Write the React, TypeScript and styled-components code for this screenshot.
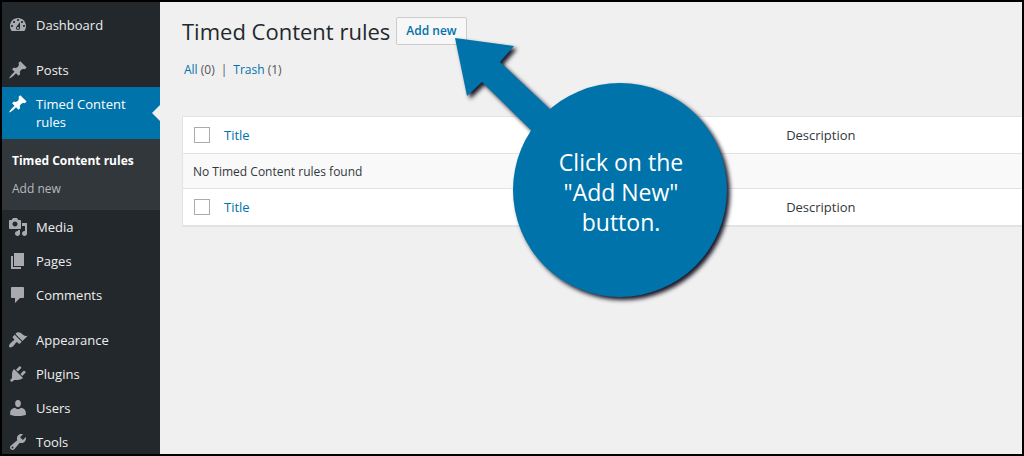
import React from "react";
import styled, { createGlobalStyle, css } from "styled-components";

const GlobalStyle = createGlobalStyle`
  *, *::before, *::after { box-sizing: border-box; }
  body {
    margin: 0;
    background: #f0f0f0;
    color: #32373c;
    font: 13px/18px "Open Sans", "Noto Sans", sans-serif;
  }
  a { color: #0073aa; text-decoration: none; }
`;

const Frame = styled.div`
  position: relative;
  display: flex;
  height: 100vh;
  border: 2px solid #000;
  overflow: hidden;
`;

const Sidebar = styled.nav`
  flex: 0 0 158px;
  padding-top: 6px;
  background: #23282d;
`;

const Menu = styled.ul`
  margin: 0;
  padding: 0;
  list-style: none;
`;

const MenuItem = styled.li<{ $gap?: boolean }>`
  margin-top: ${(p) => (p.$gap ? 11 : 0)}px;
`;

const MenuLink = styled.a<{ $current?: boolean }>`
  position: relative;
  display: flex;
  align-items: flex-start;
  gap: 8px;
  padding: 8px 24px 8px 6px;
  color: #eee;
  ${(p) =>
    p.$current &&
    css`
      background: #0073aa;
      color: #fff;
      &::after {
        content: "";
        position: absolute;
        right: 0;
        top: 50%;
        margin-top: -8px;
        border: 8px solid transparent;
        border-left-width: 0;
        border-right-color: #f0f0f0;
      }
    `}
`;

const MenuIcon = styled.svg<{ $current?: boolean }>`
  flex: none;
  width: 20px;
  height: 20px;
  margin: -1px 0;
  fill: ${(p) => (p.$current ? "#fff" : "#a8aaaf")};
`;

const Submenu = styled.ul`
  margin: 0;
  padding: 8px 0 7px;
  list-style: none;
  background: #32373c;
`;

const SubmenuLink = styled.a<{ $current?: boolean }>`
  display: block;
  padding: 5px 10px;
  white-space: nowrap;
  font-size: 12px;
  color: ${(p) => (p.$current ? "#fff" : "#b4b9be")};
  font-weight: ${(p) => (p.$current ? 700 : 400)};
`;

const Main = styled.main`
  flex: 1;
  min-width: 0;
  padding: 14px 0 0 22px;
`;

const Header = styled.header`
  display: flex;
  align-items: center;
  gap: 6px;
`;

const Title = styled.h1`
  margin: 0;
  font-size: 22px;
  line-height: 30px;
  font-weight: 400;
  color: #23282d;
`;

const AddButton = styled.button`
  height: 28px;
  padding: 0 9px;
  border: 1px solid #ccc;
  border-radius: 2px;
  background: #f7f7f7;
  color: #0073aa;
  font: 600 12px/16px "Open Sans", "Noto Sans", sans-serif;
`;

const Filters = styled.div`
  display: flex;
  gap: 6px;
  padding: 15px 2px 0;
  margin-bottom: 37px;
  font-size: 12px;
  color: #555;
`;

const RuleTable = styled.table`
  width: 100%;
  table-layout: fixed;
  border-collapse: separate;
  border-spacing: 0;
  border: 1px solid #e1e4e4;
  border-width: 1px 0 2px 1px;
  background: #fff;
`;

const Cell = styled.td<{ $width?: string }>`
  width: ${(p) => p.$width ?? "auto"};
  height: 36px;
  padding: 0 0 0 11px;
  text-align: left;
  font-weight: 400;
  vertical-align: middle;
  tbody & {
    padding: 1px 10px 0;
    border: solid #e1e4e4;
    border-width: 1px 0;
    background: #f9f9f9;
    font-size: 12px;
  }
`;

const Checkbox = styled.input`
  appearance: none;
  display: block;
  width: 16px;
  height: 16px;
  margin: 0;
  border: 1px solid #a8acb0;
  background: #fff;
`;

const Callout = styled.aside`
  position: absolute;
  left: 451px;
  top: 34px;
  width: 284px;
  height: 270px;
`;

const CalloutShape = styled.svg`
  display: block;
  overflow: visible;
  fill: #0073aa;
  filter: drop-shadow(3px 3px 2px #191526);
`;

const CalloutText = styled.p`
  position: absolute;
  left: 60px;
  top: 111px;
  width: 216px;
  margin: 0;
  color: #fff;
  font-size: 23px;
  line-height: 30px;
  text-align: center;
`;

const icons = {
  dashboard:
    "M3.76 16h12.48c1.1-1.37 1.76-3.11 1.76-5 0-4.42-3.58-8-8-8s-8 3.58-8 8c0 1.89.66 3.63 1.76 5zM10 4c.55 0 1 .45 1 1s-.45 1-1 1-1-.45-1-1 .45-1 1-1zM6 6c.55 0 1 .45 1 1s-.45 1-1 1-1-.45-1-1 .45-1 1-1zm8 0c.55 0 1 .45 1 1s-.45 1-1 1-1-.45-1-1 .45-1 1-1zm-5.37 5.55L12 7v6c0 1.1-.9 2-2 2s-2-.9-2-2c0-.57.24-1.08.63-1.45zM4 10c.55 0 1 .45 1 1s-.45 1-1 1-1-.45-1-1 .45-1 1-1zm12 0c.55 0 1 .45 1 1s-.45 1-1 1-1-.45-1-1 .45-1 1-1zm-5 3c0-.55-.45-1-1-1s-1 .45-1 1 .45 1 1 1 1-.45 1-1z",
  pin: "M10.44 3.02l1.82-1.82 6.36 6.35-1.83 1.82c-1.05-.68-2.48-.57-3.41.36l-.75.75c-.92.93-1.04 2.35-.35 3.41l-1.83 1.82-2.41-2.41-2.8 2.79c-.42.42-3.38 2.71-3.8 2.29s1.86-3.39 2.28-3.81l2.79-2.79L4.1 9.36l1.83-1.82c1.05.69 2.48.57 3.4-.36l.75-.75c.93-.92 1.05-2.35.36-3.41z",
  media:
    "M13 11V4c0-.55-.45-1-1-1h-1.67L9 1H5L3.67 3H2c-.55 0-1 .45-1 1v7c0 .55.45 1 1 1h10c.55 0 1-.45 1-1zM7 4.5c1.38 0 2.5 1.12 2.5 2.5S8.38 9.5 7 9.5 4.5 8.38 4.5 7 5.62 4.5 7 4.5zM14 6h5v10.5c0 1.38-1.12 2.5-2.5 2.5S14 17.88 14 16.5s1.12-2.5 2.5-2.5c.17 0 .34.02.5.05V9h-3V6zm-4 8.05V13h2v3.5c0 1.38-1.12 2.5-2.5 2.5S7 17.88 7 16.5 8.12 14 9.5 14c.17 0 .34.02.5.05z",
  pages: "M6 15V2h10v13H6zm-1 1h8v2H3V5h2v11z",
  comments:
    "M4 2h11c.55 0 1 .45 1 1v9c0 .55-.45 1-1 1h-3l-5 5v-5H4c-.55 0-1-.45-1-1V3c0-.55.45-1 1-1z",
  appearance:
    "M14.48 11.06L7.41 3.99l1.5-1.5c.5-.56 2.3-.47 3.51.32 1.21.8 1.43 1.28 2.91 2.1 1.18.64 2.45 1.26 4.45.85zm-.71.71L6.7 4.7 4.93 6.47c-.39.39-.39 1.02 0 1.41l1.06 1.06c.39.39.39 1.03 0 1.42-.6.6-1.43 1.11-2.21 1.69-.35.26-.7.53-1.01.84C1.43 14.23.4 16.08 1.4 17.07c.99 1 2.84-.03 4.18-1.36.31-.31.58-.66.85-1.02.57-.78 1.08-1.61 1.69-2.21.39-.39 1.02-.39 1.41 0l1.06 1.06c.39.39 1.02.39 1.41 0z",
  plugins:
    "M13.11 4.36L9.87 7.6 8 5.73l3.24-3.24c.35-.34 1.05-.2 1.56.32.52.51.66 1.21.31 1.55zm-8 1.77l.91-1.12 9.01 9.01-1.19.84c-.71.71-2.63 1.16-3.82 1.16H6.14L4.9 17.26c-.59.59-1.54.59-2.12 0-.59-.58-.59-1.53 0-2.12l1.24-1.24v-3.88c0-1.13.4-3.19 1.09-3.89zm7.26 3.97l3.24-3.24c.34-.35 1.04-.21 1.55.31.52.51.66 1.21.31 1.55l-3.24 3.25z",
  users:
    "M10 9.25C7.9 9.25 7.1 7.4 7.1 5.6 7.1 3.6 8.1 2 10 2s2.9 1.6 2.9 3.6c0 1.8-.8 3.65-2.9 3.65zM10 11.2c1.2 0 2.2-.6 2.9-1.4 2.6.2 4.9 2.2 4.9 4.7V17s-3.9 1.1-7.8 1.1S2.2 17 2.2 17v-2.5c0-2.5 2.3-4.5 4.9-4.7.7.8 1.7 1.4 2.9 1.4z",
  tools:
    "M16.68 9.77c-1.34 1.34-3.3 1.67-4.95.99l-5.41 6.52c-.99.99-2.59.99-3.58 0s-.99-2.59 0-3.57l6.52-5.42c-.68-1.65-.35-3.61.99-4.95 1.28-1.28 3.12-1.62 4.72-1.06l-2.89 2.89 2.82 2.82 2.86-2.87c.53 1.58.18 3.39-1.08 4.65zM3.81 16.21c.4.39 1.04.39 1.43 0 .4-.4.4-1.04 0-1.43-.39-.4-1.03-.4-1.43 0-.39.39-.39 1.03 0 1.43z",
};

type Entry = {
  label: string;
  icon: keyof typeof icons;
  gap?: boolean;
  children?: string[];
};

const entries: Entry[] = [
  { label: "Dashboard", icon: "dashboard" },
  { label: "Posts", icon: "pin", gap: true },
  {
    label: "Timed Content rules",
    icon: "pin",
    children: ["Timed Content rules", "Add new"],
  },
  { label: "Media", icon: "media" },
  { label: "Pages", icon: "pages" },
  { label: "Comments", icon: "comments" },
  { label: "Appearance", icon: "appearance", gap: true },
  { label: "Plugins", icon: "plugins" },
  { label: "Users", icon: "users" },
  { label: "Tools", icon: "tools" },
];

function HeadingRow() {
  return (
    <tr>
      <Cell $width="30px">
        <Checkbox type="checkbox" aria-label="Select all" />
      </Cell>
      <Cell as="th" scope="col" $width="67%">
        <a href="#title">Title</a>
      </Cell>
      <Cell as="th" scope="col">
        Description
      </Cell>
    </tr>
  );
}

export default function App() {
  return (
    <>
      <GlobalStyle />
      <Frame>
        <Sidebar aria-label="Main menu">
          <Menu>
            {entries.map(({ label, icon, gap, children }) => (
              <MenuItem key={label} $gap={gap}>
                <MenuLink href="#menu" $current={!!children}>
                  <MenuIcon viewBox="0 0 20 20" $current={!!children} aria-hidden="true">
                    <path d={icons[icon]} fillRule="evenodd" />
                  </MenuIcon>
                  {label}
                </MenuLink>
                {children && (
                  <Submenu>
                    {children.map((child, i) => (
                      <li key={child}>
                        <SubmenuLink href="#submenu" $current={i === 0}>
                          {child}
                        </SubmenuLink>
                      </li>
                    ))}
                  </Submenu>
                )}
              </MenuItem>
            ))}
          </Menu>
        </Sidebar>
        <Main>
          <Header>
            <Title>Timed Content rules</Title>
            <AddButton type="button">Add new</AddButton>
          </Header>
          <Filters>
            <span>
              <a href="#all">All</a> (0)
            </span>
            <span>|</span>
            <span>
              <a href="#trash">Trash</a> (1)
            </span>
          </Filters>
          <RuleTable>
            <thead>
              <HeadingRow />
            </thead>
            <tbody>
              <tr>
                <Cell colSpan={3}>No Timed Content rules found</Cell>
              </tr>
            </tbody>
            <tfoot>
              <HeadingRow />
            </tfoot>
          </RuleTable>
        </Main>
        <Callout>
          <CalloutShape width="284" height="270" viewBox="0 0 284 270" aria-hidden="true">
            <path d="M2 2L61 10L47 26L100 76L80 96L29 46L14 60Z" />
            <circle cx="167" cy="154" r="107" />
          </CalloutShape>
          <CalloutText>
            Click on the
            <br />
            "Add New"
            <br />
            button.
          </CalloutText>
        </Callout>
      </Frame>
    </>
  );
}
